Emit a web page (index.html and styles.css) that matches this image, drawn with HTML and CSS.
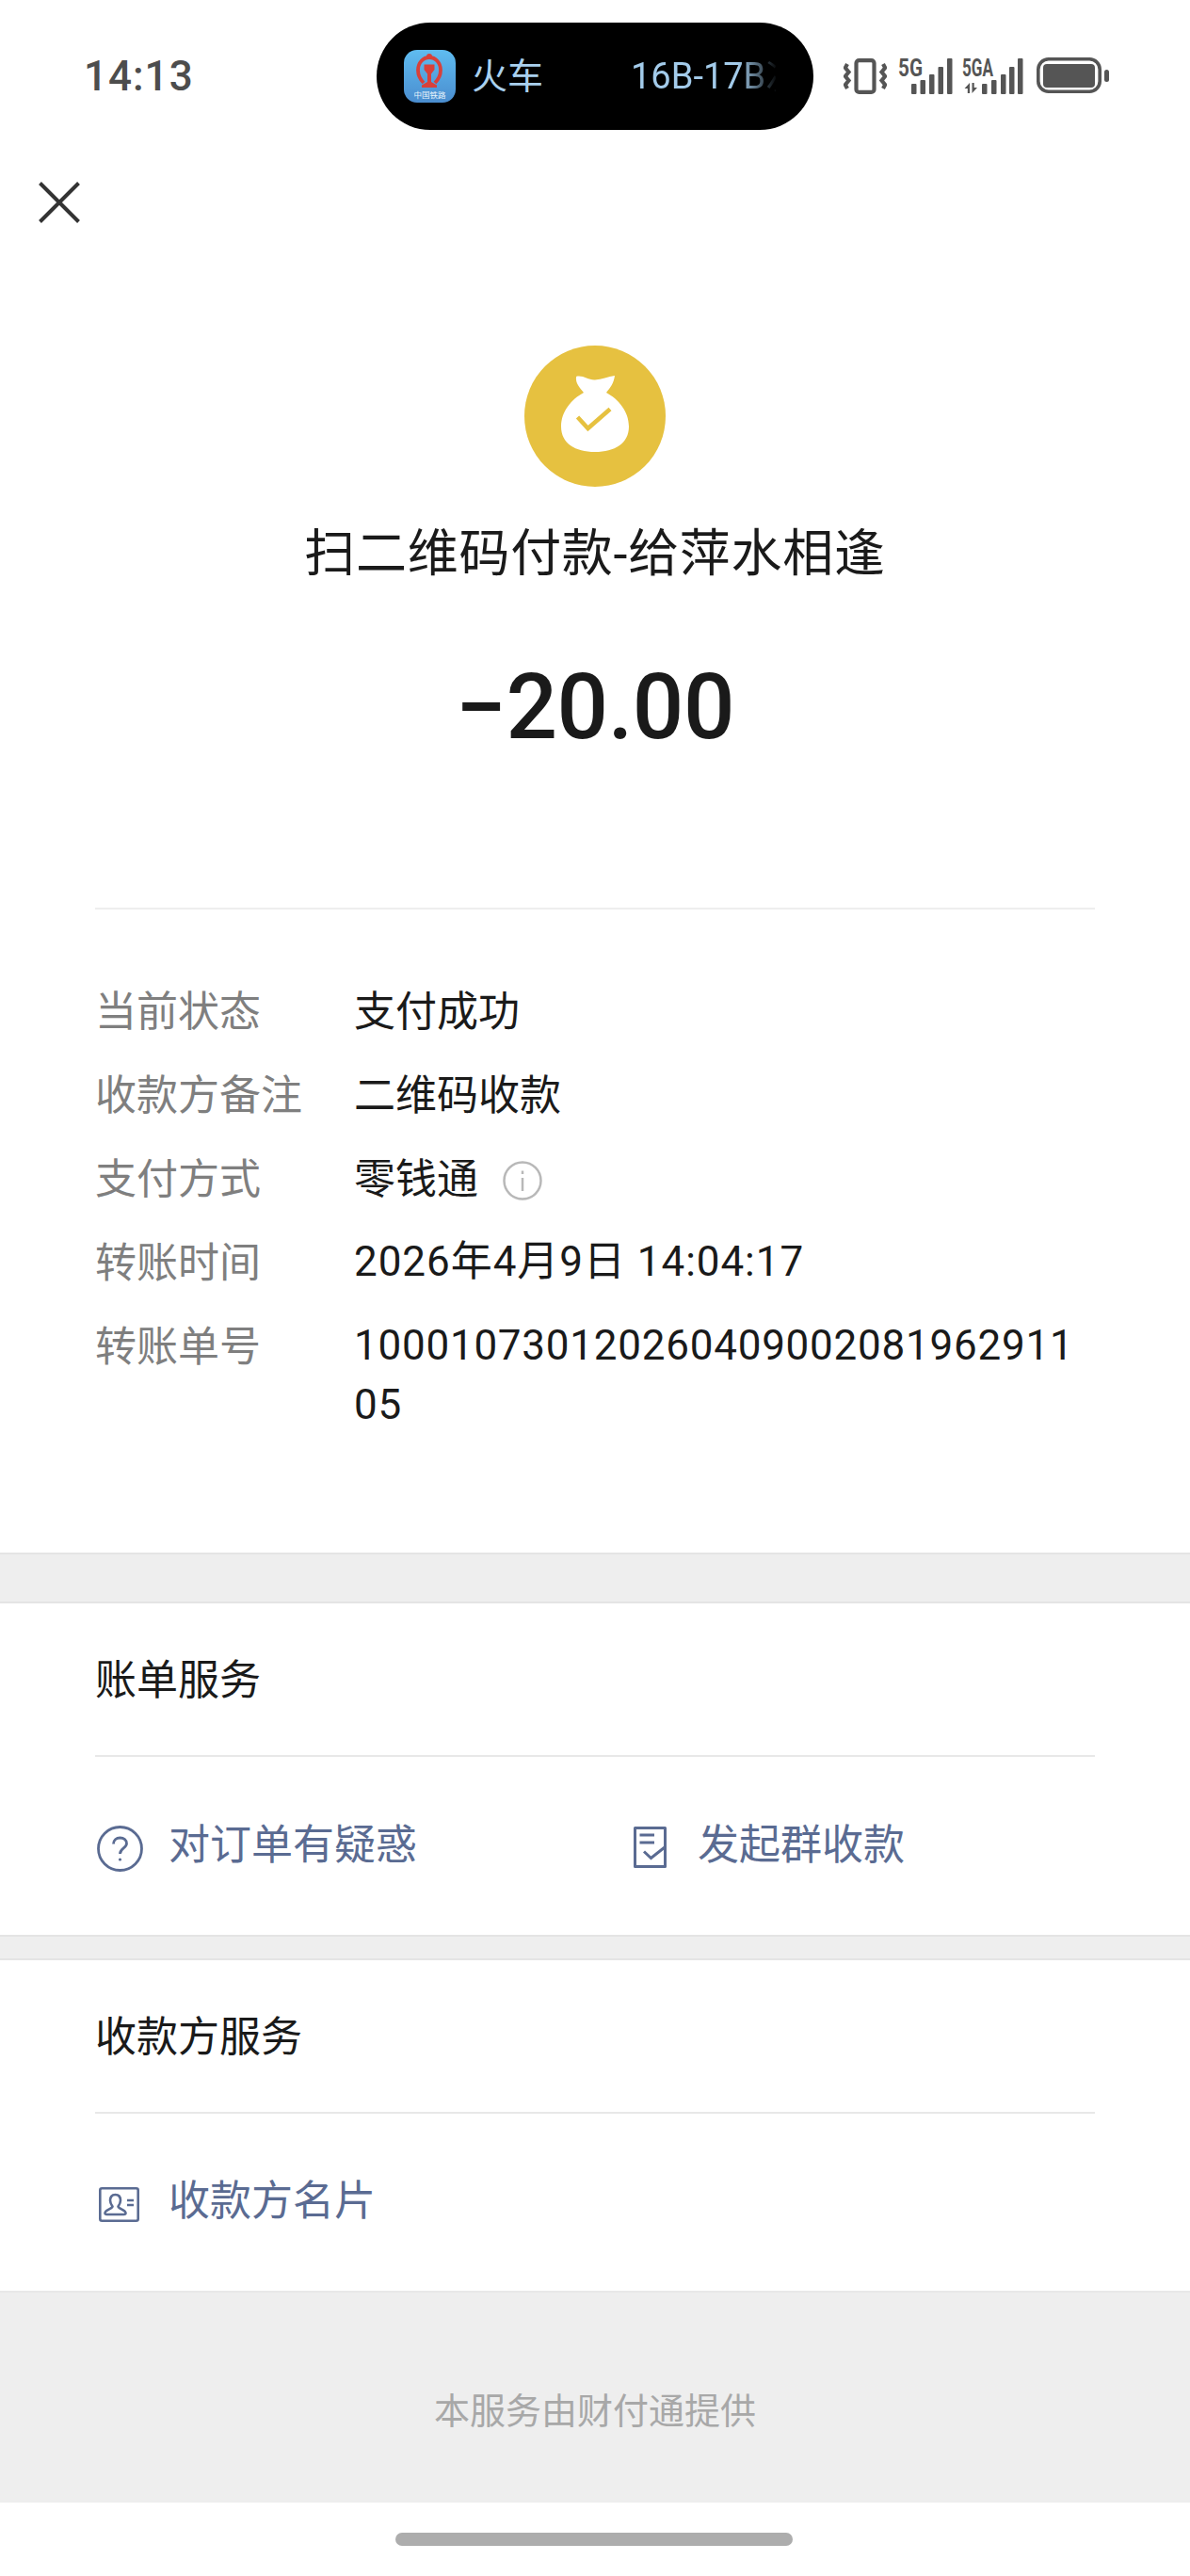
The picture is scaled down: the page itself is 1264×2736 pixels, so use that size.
FILE: index.html
```html
<!DOCTYPE html>
<html lang="zh-CN">
<head>
<meta charset="utf-8">
<title>账单详情</title>
<link rel="stylesheet" href="styles.css">
</head>
<body>
<div class="page">
  <header class="status">
    <span class="time">14:13</span>
    <div class="pill">
      <svg class="app-icon" width="55" height="56" viewBox="0 0 55 56">
        <defs><linearGradient id="appg" x1="0" y1="0" x2="0" y2="1"><stop offset="0" stop-color="#5fbcf0"/><stop offset="1" stop-color="#4a8dcf"/></linearGradient></defs>
        <rect width="55" height="56" rx="14" fill="url(#appg)"/>
        <path d="M21 35C17 31 15 26 15 21.500C15 13.500 20.500 8 27 8C33.500 8 39 13.500 39 21.500C39 26 37 31 33 35" fill="none" stroke="#d8403a" stroke-width="3.800"/>
        <circle cx="27" cy="7" r="3" fill="#d8403a"/>
        <path d="M21.500 15.500H32.500V21L29 25.500V34L35 37.500V40H19V37.500L25 34V25.500L21.500 21Z" fill="#d8403a"/>
        <text class="app-label" x="27.500" y="51" text-anchor="middle">中国铁路</text>
      </svg>
      <span class="pill-name">火车</span>
      <span class="pill-route">16B-17B次</span>
    </div>
    <div class="sys-icons">
      <svg class="sys-vibrate" width="46" height="38" viewBox="0 0 46 38" fill="none" stroke="#555" stroke-width="4.200">
        <rect x="13.500" y="2.100" width="19" height="33.800" rx="3"/>
        <path d="M4 6L1.800 10L5.500 14.500L1.800 19L5.500 23.500L1.800 28L4 32"/>
        <path d="M42 6L44.200 10L40.500 14.500L44.200 19L40.500 23.500L44.200 28L42 32"/>
      </svg>
      <svg class="sys-5g" width="58" height="38" viewBox="0 0 58 38" fill="#555">
        <text class="sig-label" x="0" y="19" textLength="26" lengthAdjust="spacingAndGlyphs">5G</text>
        <rect x="14" y="27" width="5.500" height="11" rx="1"/>
        <rect x="23.500" y="23" width="5.500" height="15" rx="1"/>
        <rect x="33" y="17" width="5.500" height="21" rx="1"/>
        <rect x="42.500" y="9" width="5.500" height="29" rx="1"/>
        <rect x="52" y="0" width="5.500" height="38" rx="1"/>
      </svg>
      <svg class="sys-5ga" width="65" height="38" viewBox="0 0 65 38" fill="#555">
        <text class="sig-label" x="0" y="19" textLength="33" lengthAdjust="spacingAndGlyphs">5GA</text>
        <path d="M8 26V37H5.800V32H2.500ZM10.500 26H12.700V31H16L10.500 37Z"/>
        <rect x="21" y="27" width="5.500" height="11" rx="1"/>
        <rect x="31" y="23" width="5.500" height="15" rx="1"/>
        <rect x="41" y="17" width="5.500" height="21" rx="1"/>
        <rect x="50" y="9" width="5.500" height="29" rx="1"/>
        <rect x="59" y="0" width="5.500" height="38" rx="1"/>
      </svg>
      <svg class="sys-battery" width="77" height="38" viewBox="0 0 77 38" fill="#555">
        <rect x="1.800" y="1.800" width="65.400" height="34.400" rx="11" fill="none" stroke="#555" stroke-width="3.600"/>
        <rect x="7" y="7" width="55" height="25" rx="4"/>
        <rect x="72" y="13" width="5" height="13" rx="2.500"/>
      </svg>
    </div>
  </header>

  <div class="close-row">
    <svg width="44" height="44" viewBox="0 0 44 44" fill="none" stroke="#333" stroke-width="4">
      <path d="M1.500 1.500L42.500 42.500M42.500 1.500L1.500 42.500"/>
    </svg>
  </div>

  <section class="hero">
    <svg class="hero-icon" width="150" height="150" viewBox="0 0 150 150">
      <circle cx="75" cy="75" r="75" fill="#e6c140"/>
      <path d="M55 33C62 31 68 37 75 36.500C82 36 89 33 96 32C95 40 91 45 87 50C100 57 111 70 111 86C111 104 96 113 75 113C54 113 39 104 39 86C39 70 50 57 63 50C59 45 54 40 55 33Z" fill="#fff"/>
      <path d="M56.500 76L67.500 88L91 67.500" fill="none" stroke="#e6c140" stroke-width="4.500"/>
    </svg>
    <h1 class="title">扫二维码付款-给萍水相逢</h1>
    <div class="amount">−20.00</div>
  </section>

  <section class="info">
    <div class="row"><span class="label">当前状态</span><span class="value value-cjk">支付成功</span></div>
    <div class="row"><span class="label">收款方备注</span><span class="value value-cjk">二维码收款</span></div>
    <div class="row">
      <span class="label">支付方式</span>
      <span class="value value-cjk value-icon">零钱通
        <svg width="42" height="42" viewBox="0 0 42 42" fill="none" stroke="#b8b8b8">
          <circle cx="21" cy="21" r="19.500" stroke-width="2.500"/>
          <path d="M21 18V32" stroke-width="2.500"/>
          <path d="M21 10.500V14" stroke-width="2.500"/>
        </svg>
      </span>
    </div>
    <div class="row"><span class="label">转账时间</span><span class="value value-num value-date">2026年4月9日 14:04:17</span></div>
    <div class="row"><span class="label">转账单号</span><span class="value value-num value-wrap">10001073012026040900208196291105</span></div>
  </section>

  <div class="band band-first"></div>

  <section class="group">
    <h2 class="group-head">账单服务</h2>
    <div class="links">
      <a class="link link-query">
        <svg width="49" height="49" viewBox="0 0 49 49" fill="none" stroke="#5a6b92" stroke-width="2.800">
          <circle cx="24.500" cy="24.500" r="23"/>
          <path d="M17.500 19.500C17.500 15.500 20.500 13 24.500 13C28.500 13 31.500 15.500 31.500 19C31.500 24 24.500 24 24.500 30"/>
          <circle cx="24.500" cy="36" r="1.600" fill="#5a6b92" stroke="none"/>
        </svg>
        <span>对订单有疑惑</span>
      </a>
      <a class="link link-split">
        <svg width="35" height="44" viewBox="0 0 35 44" fill="none" stroke="#5a6b92" stroke-width="3">
          <path d="M1.500 1.500H33.500V42.500H1.500Z" stroke-linejoin="round"/>
          <path d="M6.500 9H22M6.500 17H22"/>
          <path d="M11 26.500L18.500 33.500L33 22"/>
        </svg>
        <span>发起群收款</span>
      </a>
    </div>
  </section>

  <div class="band band-mid"></div>

  <section class="group">
    <h2 class="group-head">收款方服务</h2>
    <div class="links links-last">
      <a class="link link-card">
        <svg width="43" height="37" viewBox="0 0 43 37" fill="none" stroke="#5a6b92" stroke-width="2.600">
          <rect x="1.300" y="1.300" width="40.400" height="34.400" rx="2"/>
          <path d="M17.500 8C13.500 8 12 11 12 14C12 17 13.500 19 14.500 20.500C14.500 23 6.500 24 6.500 27.500C6.500 28.500 7.500 29 8.500 29H26.500C27.500 29 28.500 28.500 28.500 27.500C28.500 24 20.500 23 20.500 20.500C21.500 19 23 17 23 14C23 11 21.500 8 17.500 8Z"/>
          <path d="M30 14H37M30 19H37"/>
        </svg>
        <span>收款方名片</span>
      </a>
    </div>
  </section>

  <footer class="foot">本服务由财付通提供</footer>
  <div class="home"><div class="home-bar"></div></div>
</div>
</body>
</html>
```

FILE: styles.css
```css
* { box-sizing: border-box; }
html, body { margin: 0; padding: 0; background: #fff; }
body { font-family: Roboto, "Noto Sans CJK SC", sans-serif; color: #1a1a1a; }
.page { width: 1264px; height: 2736px; overflow: hidden; background: #fff; }

.status { display: flex; align-items: flex-start; height: 138px; padding: 24px 0 0 89px; }
.time { width: 311px; margin-top: 35px; font-size: 44px; line-height: 44px; font-weight: 500; letter-spacing: 1px; color: #4d4d4d; }
.pill { display: flex; align-items: center; flex: none; width: 464px; height: 114px; padding-left: 29px; border-radius: 57px; background: #000; }
.app-icon { flex: none; }
.app-label { font-size: 8.5px; fill: #e6f2fb; font-family: "Noto Sans CJK SC", sans-serif; }
.pill-name { width: 169px; margin-left: 17px; font-size: 38px; line-height: 50px; color: #a9d0ee; }
.pill-route { flex: none; width: 154px; overflow: hidden; white-space: nowrap; font-size: 38px; line-height: 50px; color: #a3cbea; -webkit-mask-image: linear-gradient(to right, #000 74%, rgba(0,0,0,.05) 100%); mask-image: linear-gradient(to right, #000 74%, rgba(0,0,0,.05) 100%); }
.sys-icons { display: flex; align-items: flex-start; margin: 38px 0 0 32px; }
.sys-5g { margin-left: 12px; overflow: visible; }
.sys-5ga { margin-left: 10px; overflow: visible; }
.sys-battery { margin-left: 14px; margin-top: -1px; }
.sig-label { font-family: Roboto, sans-serif; font-size: 25px; font-weight: 700; }

.close-row { padding: 55px 0 0 41px; height: 99px; }
.close-row svg { display: block; }

.hero { display: flex; flex-direction: column; align-items: center; }
.hero-icon { margin-top: 130px; }
.title { margin: 36px 0 0; font-size: 54px; line-height: 72px; font-weight: 400; letter-spacing: 0.7px; color: #1a1a1a; }
.amount { margin-top: 70px; font-size: 96px; line-height: 112px; font-weight: 500; letter-spacing: -0.500px; color: #1a1a1a; }

.info { margin: 157px 101px 0; padding: 76px 0 125px; border-top: 2px solid #eee; display: flex; flex-direction: column; gap: 24px; }
.row { display: flex; font-size: 44px; line-height: 63px; }
.label { flex: none; width: 275px; padding-top: 2px; color: #7f7f7f; }
.value { color: #1a1a1a; }
.value-cjk { padding-top: 2px; }
.value-num { padding-top: 0; letter-spacing: 0.75px; }
.value-date { letter-spacing: 0.95px; }
.value-icon { display: flex; align-items: center; gap: 26px; }
.value-wrap { width: 780px; word-break: break-all; }

.band { background: #eee; border-top: 2px solid #e4e4e4; border-bottom: 2px solid #e4e4e4; }
.band-first { height: 54px; }
.band-mid { height: 27px; }

.group { background: #fff; padding: 0 101px; }
.group-head { margin: 0; height: 163px; border-bottom: 2px solid #e8e8e8; font-size: 44px; line-height: 164px; font-weight: 400; color: #1a1a1a; }
.links { display: flex; align-items: center; height: 189px; }
.links-last { height: 188px; }
.link { display: flex; align-items: center; font-size: 44px; line-height: 63px; color: #5a6b92; }
.link span { margin-bottom: 1px; }
.link svg { margin-top: 5px; }
.link-query { width: 572px; padding-left: 2px; gap: 27px; }
.link-split { gap: 33px; }
.link-split svg { margin-top: 2px; }
.link-card { padding-left: 4px; gap: 31px; }
.link-card svg { margin-top: 4px; }

.foot { height: 225px; background: #eee; border-top: 2px solid #e8e8e8; text-align: center; font-size: 38px; line-height: 252px; color: #a8a8a8; }
.home { padding: 32px 0 0 420px; }
.home-bar { width: 422px; height: 14px; border-radius: 7px; background: #adadad; }
```
